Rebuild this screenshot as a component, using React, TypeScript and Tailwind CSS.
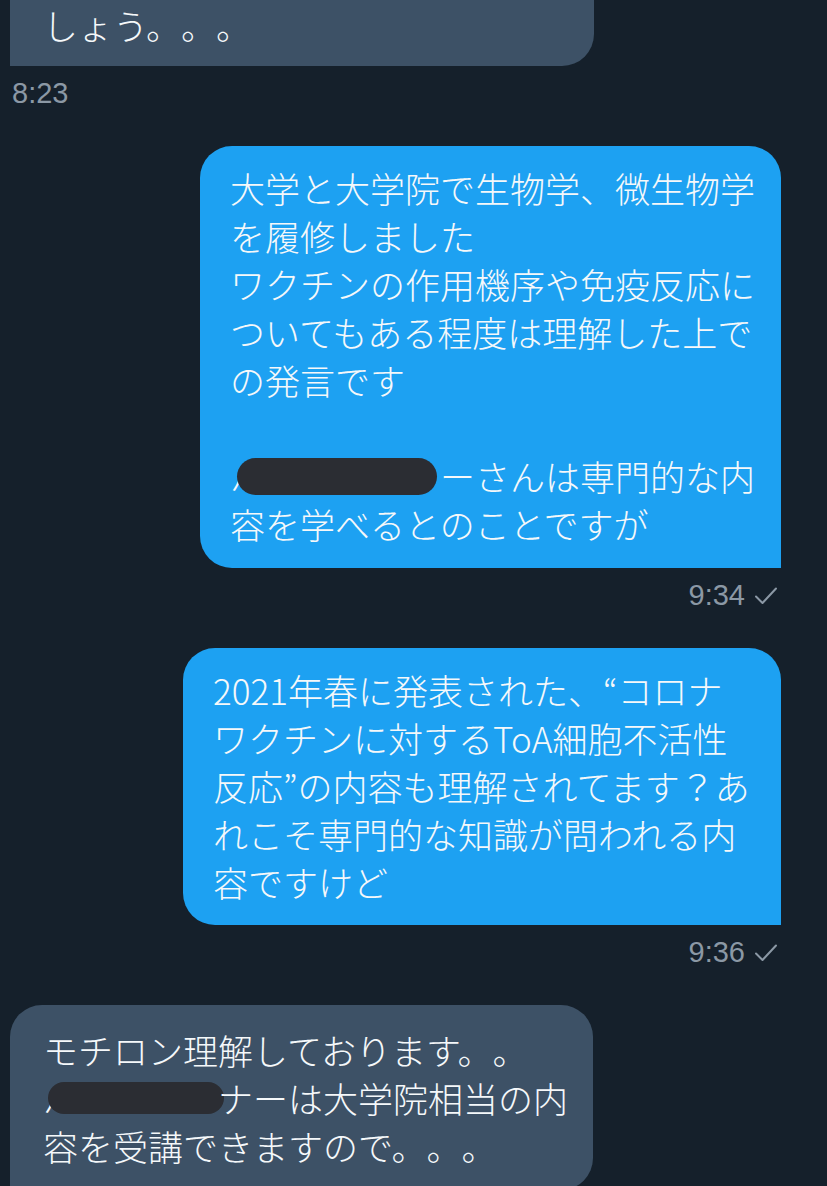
import React from "react";

const Check = () => (
  <svg width="22" height="18" viewBox="0 0 22 18" fill="none" className="mt-[2px]">
    <polyline points="1,9.5 7.5,16 21,1.5" stroke="#8b98a5" strokeWidth="2" strokeLinecap="round" strokeLinejoin="round" />
  </svg>
);

const Line = ({ children }: { children?: React.ReactNode }) => (
  <div className="flex items-center h-[48px] whitespace-nowrap">{children}</div>
);

export default function App() {
  return (
    <div className="w-[827px] h-[1186px] overflow-hidden bg-[#15202b] text-[#f5f8fa] font-['Noto_Sans_CJK_JP','Noto_Sans_CJK_SC',sans-serif] font-light text-[35px] leading-[48px] [text-spacing-trim:space-all]">
      {/* top received bubble (cut off) */}
      <div className="ml-[10px] w-[584px] bg-[#3d5166] rounded-br-[32px] pl-[33px] pt-[1px] pb-[17px]">
        <Line>しょう。。。</Line>
      </div>
      <div className="ml-[12px] mt-[10px] h-[34px] leading-[34px] text-[29px] font-normal text-[#8b98a5] font-['Liberation_Sans',sans-serif]">
        8:23
      </div>

      {/* sent bubble 1 */}
      <div className="ml-auto mr-[46px] mt-[36px] w-[581px] bg-[#1da1f2] rounded-[32px] rounded-br-none pl-[30px] pt-[18px] pb-[20px]">
        <Line>大学と大学院で生物学、微生物学</Line>
        <Line>を履修しました</Line>
        <Line>ワクチンの作用機序や免疫反応に</Line>
        <Line>ついてもある程度は理解した上で</Line>
        <Line>の発言です</Line>
        <Line />
        <Line>
          <span>パ</span>
          <span className="ml-[-28px] w-[200px] h-[37px] rounded-full bg-[#2b2d33] shrink-0" />
          <span className="ml-[3px]">ーさんは専門的な内</span>
        </Line>
        <Line>容を学べるとのことですが</Line>
      </div>
      <div className="mt-[10px] h-[34px] flex items-center justify-end gap-[10px] pr-[50px] text-[29px] leading-[34px] font-normal text-[#8b98a5] font-['Liberation_Sans',sans-serif]">
        <span>9:34</span>
        <Check />
      </div>

      {/* sent bubble 2 */}
      <div className="ml-auto mr-[46px] mt-[36px] w-[598px] bg-[#1da1f2] rounded-[32px] rounded-br-none pl-[30px] pt-[18px] pb-[19px]">
        <Line>2021年春に発表された、“コロナ</Line>
        <Line>ワクチンに対するToA細胞不活性</Line>
        <Line>反応”の内容も理解されてます？あ</Line>
        <Line>れこそ専門的な知識が問われる内</Line>
        <Line>容ですけど</Line>
      </div>
      <div className="mt-[10px] h-[34px] flex items-center justify-end gap-[10px] pr-[50px] text-[29px] leading-[34px] font-normal text-[#8b98a5] font-['Liberation_Sans',sans-serif]">
        <span>9:36</span>
        <Check />
      </div>

      {/* received bubble */}
      <div className="ml-[10px] mt-[36px] w-[583px] bg-[#3d5166] rounded-t-[32px] rounded-br-[32px] pl-[33px] pt-[21px] pb-[20px]">
        <Line>モチロン理解しております。。</Line>
        <Line>
          <span>パ</span>
          <span className="ml-[-30px] w-[176px] h-[32px] rounded-full bg-[#2b2d33] shrink-0" />
          <span className="ml-[-6px]">ナーは大学院相当の内</span>
        </Line>
        <Line>容を受講できますので。。。</Line>
      </div>
    </div>
  );
}
